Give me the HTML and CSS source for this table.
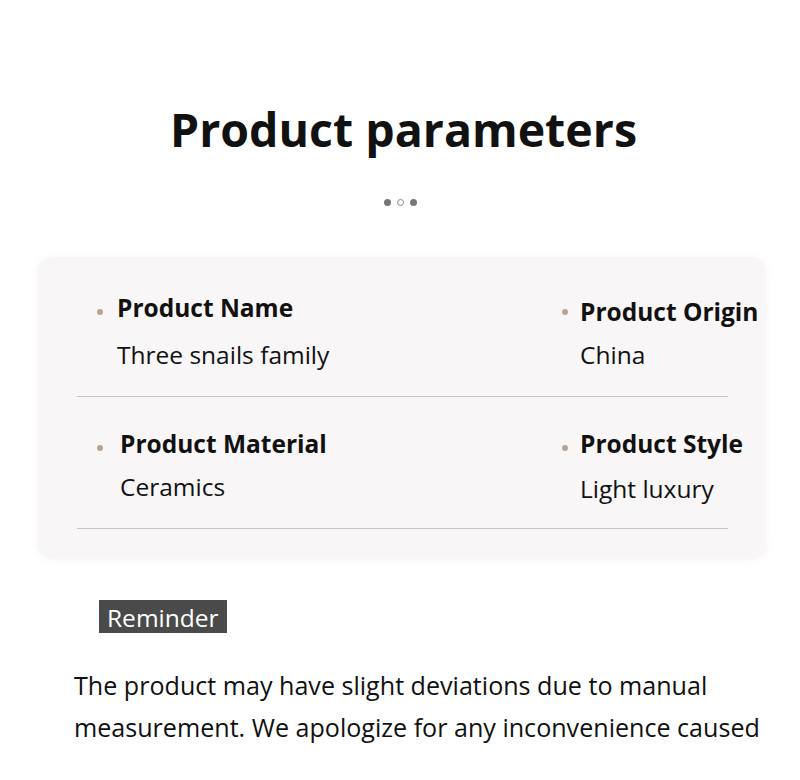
FILE: index.html
```html
<!DOCTYPE html>
<html>
<head>
<meta charset="utf-8">
<link rel="stylesheet" href="styles.css">
</head>
<body>
<main class="page">
  <h1 class="title">Product parameters</h1>
  <div class="dots"><span class="dot"></span><span class="dot hollow"></span><span class="dot"></span></div>
  <section class="card">
    <div class="row first">
      <div class="item">
        <div class="label"><span class="bullet"></span>Product Name</div>
        <div class="value">Three snails family</div>
      </div>
      <div class="item right shift">
        <div class="label"><span class="bullet"></span>Product Origin</div>
        <div class="value">China</div>
      </div>
    </div>
    <div class="row second">
      <div class="item indent">
        <div class="label"><span class="bullet"></span>Product Material</div>
        <div class="value">Ceramics</div>
      </div>
      <div class="item right">
        <div class="label"><span class="bullet"></span>Product Style</div>
        <div class="value">Light luxury</div>
      </div>
    </div>
  </section>
  <div class="reminder"><span class="tag">Reminder</span></div>
  <p class="note">The product may have slight deviations due to manual measurement. We apologize for any inconvenience caused</p>
</main>
</body>
</html>
```
FILE: styles.css
```css
html, body {
  margin: 0;
  padding: 0;
  background: #ffffff;
}
body {
  font-family: "Open Sans", "Noto Sans", sans-serif;
  color: #111111;
}
.page {
  width: 800px;
  height: 780px;
  overflow: hidden;
  padding-top: 95px;
  box-sizing: border-box;
}
.title {
  margin: 0;
  padding-left: 7px;
  text-align: center;
  font-size: 46.5px;
  line-height: 68px;
  font-weight: 700;
  color: #111;
}
.dots {
  display: flex;
  justify-content: center;
  gap: 6px;
  margin-top: 36px;
}
.dot {
  width: 7px;
  height: 7px;
  border-radius: 50%;
  background: #777;
}
.dot.hollow {
  background: #fff;
  border: 1px solid #888;
  box-sizing: border-box;
}
.card {
  margin: 51px 34px 0 38px;
  background: #f8f6f6;
  border-radius: 14px;
  box-shadow: 0 1px 10px rgba(0,0,0,0.04);
  padding: 35px 38px 30px 39px;
}
.row {
  display: grid;
  grid-template-columns: 483px 1fr;
  border-bottom: 1px solid #c8c6c6;
  padding-bottom: 25px;
}
.row.second {
  padding-top: 31px;
  padding-bottom: 23px;
}
.item {
  padding-left: 40px;
  white-space: nowrap;
}
.item.right {
  padding-left: 20px;
}
.item.indent {
  padding-left: 43px;
}
.label {
  position: relative;
  font-size: 24.5px;
  font-weight: 700;
  line-height: 32px;
}
.bullet {
  position: absolute;
  left: -20px;
  top: 17px;
  width: 6px;
  height: 6px;
  border-radius: 50%;
  background: #b9a391;
}
.right .bullet {
  left: -18px;
}
.indent .bullet {
  left: -23px;
}
.value {
  font-size: 24.5px;
  line-height: 32px;
  margin-top: 15px;
}
.shift .label {
  margin-top: 4px;
}
.shift .bullet {
  top: 13px;
}
.shift .value {
  margin-top: 11px;
}
.row.second .value {
  margin-top: 11px;
}
.row.second .right .value {
  margin-top: 13px;
}
.reminder {
  display: flex;
  margin-top: 41px;
  padding-left: 99px;
}
.tag {
  display: block;
  background: #4a4a4a;
  color: #fff;
  font-size: 24.5px;
  line-height: 30px;
  padding: 3px 8px 0;
}
.note {
  margin: 31px 0 0 74px;
  width: 700px;
  font-size: 25.1px;
  line-height: 42px;
  color: #111;
}
```
